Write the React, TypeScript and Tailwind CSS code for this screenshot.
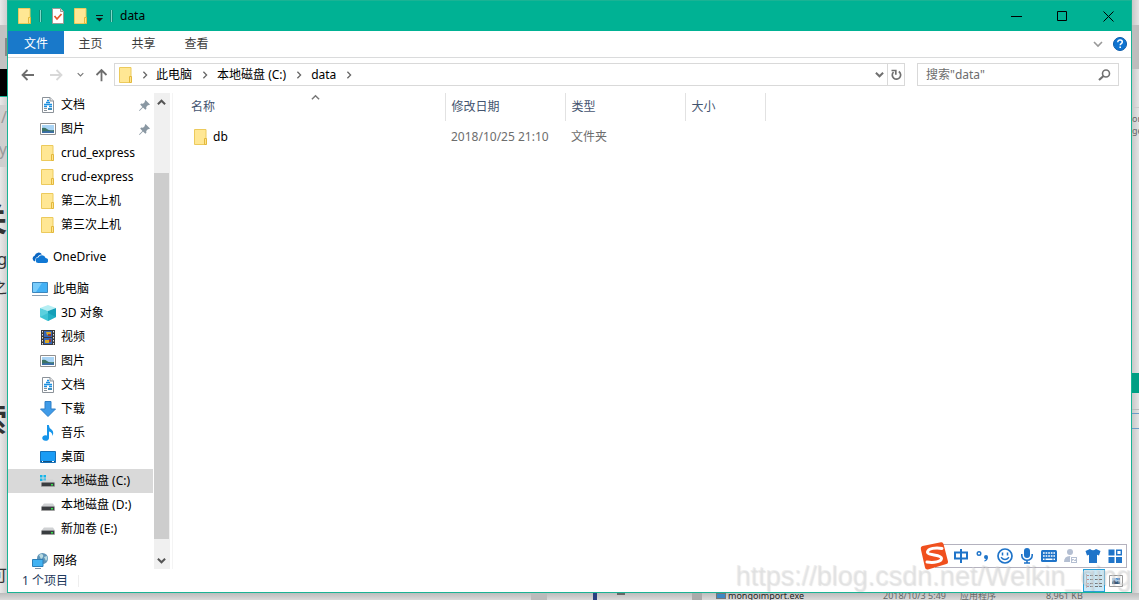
import type { ReactNode } from "react";

type IconName =
  | "document"
  | "picture"
  | "folder"
  | "onedrive"
  | "computer"
  | "cube"
  | "video"
  | "download"
  | "music"
  | "desktop"
  | "systemDrive"
  | "drive"
  | "network";

type TreeItem = { label: string; icon: IconName; pinned?: boolean; active?: boolean };
type TreeGroup = { root?: TreeItem; items: TreeItem[] };

const TREE: TreeGroup[] = [
  {
    items: [
      { label: "文档", icon: "document", pinned: true },
      { label: "图片", icon: "picture", pinned: true },
      { label: "crud_express", icon: "folder" },
      { label: "crud-express", icon: "folder" },
      { label: "第二次上机", icon: "folder" },
      { label: "第三次上机", icon: "folder" },
    ],
  },
  { root: { label: "OneDrive", icon: "onedrive" }, items: [] },
  {
    root: { label: "此电脑", icon: "computer" },
    items: [
      { label: "3D 对象", icon: "cube" },
      { label: "视频", icon: "video" },
      { label: "图片", icon: "picture" },
      { label: "文档", icon: "document" },
      { label: "下载", icon: "download" },
      { label: "音乐", icon: "music" },
      { label: "桌面", icon: "desktop" },
      { label: "本地磁盘 (C:)", icon: "systemDrive", active: true },
      { label: "本地磁盘 (D:)", icon: "drive" },
      { label: "新加卷 (E:)", icon: "drive" },
    ],
  },
  { root: { label: "网络", icon: "network" }, items: [] },
];

const CRUMBS = ["此电脑", "本地磁盘 (C:)", "data"];
const MENU = ["主页", "共享", "查看"];
const FILES = [{ name: "db", modified: "2018/10/25 21:10", type: "文件夹", size: "" }];

export default function App() {
  return (
    <div className="flex min-h-screen flex-col overflow-hidden bg-[#dcdcdc] font-['Noto_Sans','Noto_Sans_CJK_SC',sans-serif] text-xs text-black">
      <div className="flex flex-1">
        <LeftBackdrop />
        <main className="relative flex min-w-0 flex-1 flex-col border border-[#1ab394] bg-white">
          <TitleBar />
          <Ribbon />
          <AddressRow />
          <div className="flex flex-1 pt-[7px]">
            <Sidebar />
            <FileList />
          </div>
          <StatusBar />
          <InputMethodBar />
        </main>
        <RightBackdrop />
      </div>
      <BottomBackdrop />
    </div>
  );
}

function TitleBar() {
  return (
    <header className="flex h-[30px] items-center bg-[#00b294]">
      <div className="flex flex-1 items-center pl-2.5">
        <FolderIcon />
        <Separator />
        <button aria-label="属性" className="ml-2.5">
          <svg width="12" height="16" viewBox="0 0 12 16">
            <path d="M.5.5h8l3 3v12H.5z" fill="#fff" stroke="#a09a94" />
            <path d="M8.5.5v3h3" fill="#ddd" stroke="#a09a94" />
            <path d="M2.500 8l2.500 3 4.500-5" fill="none" stroke="#e8562a" strokeWidth="1.700" />
          </svg>
        </button>
        <button aria-label="新建文件夹" className="ml-2.5">
          <FolderIcon />
        </button>
        <button aria-label="自定义快速访问工具栏" className="ml-2 mt-1">
          <svg width="7" height="7" viewBox="0 0 7 7">
            <path d="M0 .5h7" stroke="#111" />
            <path d="M0 3h7L3.500 6.500z" fill="#111" />
          </svg>
        </button>
        <Separator />
        <h1 className="ml-[7px]">data</h1>
      </div>
      <WindowButton label="最小化">
        <path d="M0 5.500h11" />
      </WindowButton>
      <WindowButton label="最大化">
        <path d="M.5.5h9v9h-9z" />
      </WindowButton>
      <WindowButton label="关闭">
        <path d="M.5.5l10 10M10.500.5l-10 10" />
      </WindowButton>
    </header>
  );
}

function Separator() {
  return <span className="ml-[7px] h-3 w-[3px] border-x border-[#0a8f78] bg-[#7fd8c9]" />;
}

function WindowButton({ label, children }: { label: string; children: ReactNode }) {
  return (
    <button aria-label={label} className="flex h-full w-[46px] items-center justify-center">
      <svg width="11" height="11" viewBox="0 0 11 11" fill="none" stroke="#000">
        {children}
      </svg>
    </button>
  );
}

function Ribbon() {
  return (
    <nav className="flex h-[27px] items-start border-b border-[#dadbdc] text-[#3c3c3c]">
      <button className="h-[23px] w-14 bg-[#1979ca] pt-0.5 text-white">文件</button>
      {MENU.map((item) => (
        <button key={item} className="h-[23px] w-[53px] pt-0.5">
          {item}
        </button>
      ))}
      <div className="ml-auto flex h-[26px] items-center gap-2.5 pr-1">
        <button aria-label="展开功能区">
          <Chevron direction="down" size={10} color="#999" />
        </button>
        <button aria-label="帮助">
          <svg width="14" height="14" viewBox="0 0 14 14">
            <circle cx="7" cy="7" r="6.500" fill="#0f74d1" stroke="#0b5aa8" />
            <path
              d="M4.800 5.200c0-1.500 1-2.200 2.300-2.200s2.200.8 2.200 1.900c0 1.600-2.100 1.700-2.100 3.300"
              fill="none"
              stroke="#fff"
              strokeWidth="1.500"
            />
            <path d="M6.400 9.400h1.600V11H6.400z" fill="#fff" />
          </svg>
        </button>
      </div>
    </nav>
  );
}

function AddressRow() {
  return (
    <div className="flex items-center pt-[5px] pr-3">
      <div className="flex w-[106px] items-center pl-[13px]">
        <button aria-label="后退">
          <ArrowIcon color="#6e6e6e" className="" />
        </button>
        <button aria-label="前进" className="ml-4" disabled>
          <ArrowIcon color="#d8d8d8" className="rotate-180" />
        </button>
        <button aria-label="最近浏览的位置" className="ml-3.5">
          <Chevron direction="down" size={7} color="#777" />
        </button>
        <button aria-label="上移" className="ml-[11px]">
          <ArrowIcon color="#6e6e6e" className="rotate-90" />
        </button>
      </div>
      <div className="flex h-[23px] min-w-0 flex-1 items-center border border-[#d9d9d9]">
        <span className="ml-1">
          <FolderIcon />
        </span>
        <span className="flex w-[23px] justify-center">
          <Chevron direction="right" size={8} color="#666" />
        </span>
        {CRUMBS.map((crumb) => (
          <span key={crumb} className="flex items-center">
            <button>{crumb}</button>
            <span className="flex w-[25px] justify-center">
              <Chevron direction="right" size={8} color="#666" />
            </span>
          </span>
        ))}
        <button aria-label="以前的位置" className="ml-auto mr-[3px]">
          <Chevron direction="down" size={9} color="#707070" strong />
        </button>
        <button
          aria-label="刷新"
          className="flex h-full w-[17px] items-center justify-center border-l border-[#d9d9d9]"
        >
          <svg width="11" height="12" viewBox="0 0 11 12" fill="none" stroke="#707070" strokeWidth="1.700">
            <path d="M7.800 2.500A4.200 4.200 0 1 1 2.500 3" />
            <path d="M.5 1.500h4.300v4.300" />
          </svg>
        </button>
      </div>
      <label className="ml-3 flex h-[23px] w-[202px] items-center border border-[#d9d9d9] pr-[7px] pl-2">
        <input
          type="text"
          aria-label="搜索"
          placeholder={'搜索"data"'}
          className="min-w-0 flex-1 outline-none placeholder:text-[#6d6d6d]"
        />
        <svg width="13" height="12" viewBox="0 0 13 12" fill="none" stroke="#707070">
          <circle cx="8" cy="4.500" r="3.500" strokeWidth="1.600" />
          <path d="M5.500 7L1 11" strokeWidth="2.200" />
        </svg>
      </label>
    </div>
  );
}

function Sidebar() {
  return (
    <div className="flex w-[165px] border-r border-[#f4f4f4]">
      <nav className="flex h-[476px] w-[145px] flex-col gap-2 overflow-hidden">
        {TREE.map((group, i) => (
          <ul key={i} className="shrink-0">
            {group.root && <TreeRow item={group.root} root />}
            {group.items.map((item) => (
              <TreeRow key={item.label} item={item} />
            ))}
          </ul>
        ))}
      </nav>
      <div className="ml-px flex h-[476px] w-4 flex-col items-center bg-[#f0f0f0] pr-px">
        <button aria-label="向上滚动" className="flex h-[18px] items-center">
          <Chevron direction="up" size={9} color="#555" strong />
        </button>
        <div className="mt-[62px] w-full flex-1 bg-[#cdcdcd]" />
        <button aria-label="向下滚动" className="mt-3 flex h-[18px] items-center">
          <Chevron direction="down" size={9} color="#555" strong />
        </button>
      </div>
    </div>
  );
}

function TreeRow({ item, root = false }: { item: TreeItem; root?: boolean }) {
  return (
    <li>
      <button
        className={`flex h-6 w-full items-center pr-[3px] text-left ${root ? "pl-6" : "pl-8"} ${
          item.active ? "bg-[#d9d9d9]" : ""
        }`}
      >
        <span className="flex w-4 justify-center">
          <TreeIcon name={item.icon} />
        </span>
        <span className="ml-[5px] flex-1 whitespace-nowrap">{item.label}</span>
        {item.pinned && (
          <svg width="11" height="11" viewBox="0 0 11 11">
            <path
              d="M6.500 0L11 4.500l-1.200.8-.7-.2L7.200 7l.2 1.800-1 1L4 7.600.6 11 0 10.400 3.400 7 1.200 4.600l1-1L4 3.800l1.900-1.900-.2-.7z"
              fill="#8a98a3"
            />
          </svg>
        )}
      </button>
    </li>
  );
}

function FileList() {
  return (
    <div className="flex-1">
      <table className="table-fixed border-collapse text-left">
        <thead className="text-[#44546f]">
          <tr className="h-7">
            <th scope="col" className="relative w-[272px] border-r border-[#e2e2e2] pl-[18px] font-normal">
              名称
              <span className="absolute top-0 left-[138px]">
                <Chevron direction="up" size={9} color="#777" />
              </span>
            </th>
            <th scope="col" className="w-[120px] border-r border-[#e2e2e2] pl-1.5 font-normal">
              修改日期
            </th>
            <th scope="col" className="w-[120px] border-r border-[#e2e2e2] pl-1.5 font-normal">
              类型
            </th>
            <th scope="col" className="w-20 border-r border-[#e2e2e2] pl-1.5 font-normal">
              大小
            </th>
          </tr>
        </thead>
        <tbody className="text-[#6d6d6d]">
          {FILES.map((file) => (
            <tr key={file.name} className="h-8">
              <td className="pl-[21px] text-black">
                <span className="flex items-center gap-[5px]">
                  <FolderIcon />
                  {file.name}
                </span>
              </td>
              <td className="pl-1.5 whitespace-nowrap">{file.modified}</td>
              <td className="pl-1.5">{file.type}</td>
              <td className="pl-1.5">{file.size}</td>
            </tr>
          ))}
        </tbody>
      </table>
    </div>
  );
}

function StatusBar() {
  return (
    <footer className="flex h-[23px] items-center pr-1 pl-3.5 text-[#1e395b]">
      <span>1 个项目</span>
      <span className="ml-2.5 h-3 w-px bg-[#eee]" />
      <div className="ml-auto flex h-full items-center">
        <button
          aria-label="详细信息"
          className="flex h-full w-[22px] items-center justify-center border border-[#26a0da] bg-[#cbe8f6]"
        >
          <svg width="16" height="14" viewBox="0 0 16 14" stroke="#777">
            <path d="M.5 0v14" stroke="#bbb" />
            <path d="M4 1.500h3M9 1.500h3M13 1.500h3M4 5.500h3M9 5.500h3M13 5.500h3M4 9.500h3M9 9.500h3M13 9.500h3M4 12.500h3M9 12.500h3M13 12.500h3" />
            <path d="M1.500 1.500h1M1.500 5.500h1M1.500 9.500h1M1.500 12.500h1" stroke="#a33" />
          </svg>
        </button>
        <button aria-label="大缩略图" className="flex w-[22px] justify-center">
          <svg width="14" height="12" viewBox="0 0 14 12">
            <path d="M.5.5h13v11H.5z" fill="#fff" stroke="#999" />
            <path d="M3 3h8v6H3z" fill="#a9cbea" />
            <path d="M3 9V7l2-2 2 2 2-1 2 1v2z" fill="#39597a" />
            <path d="M7 3h4v2H8z" fill="#3679c8" />
          </svg>
        </button>
      </div>
    </footer>
  );
}

// Floats over the lower right corner, like the watermark that runs below it.
function InputMethodBar() {
  return (
    <>
      <div className="absolute right-1 bottom-6 flex h-6 w-[192px] items-center justify-end border border-[#b4b2be] bg-white text-[#1f74c9]">
        <svg className="absolute -left-4" width="30" height="28" viewBox="0 0 30 28">
          <path d="M2.500 4L21 .3q2-.3 2.500 1.700L28 19.500q.4 2-1.600 2.600L8 27.500q-2.500.5-3-2L.8 7Q.3 4.500 2.500 4z" fill="#f0501e" />
          <path
            d="M22 6.500C16 5 8 6.500 7.500 10c-.4 3.600 14 2.200 14 6.200 0 3.800-8 4.800-14.500 3.800"
            fill="none"
            stroke="#fff"
            strokeWidth="3"
            strokeLinecap="round"
          />
        </svg>
        <ToolButton label="中文输入">
          <path d="M2 4.500h12v6H2zM8 1v14" fill="none" stroke="currentColor" strokeWidth="2" />
        </ToolButton>
        <ToolButton label="中文标点">
          <circle cx="4" cy="5.500" r="1.800" fill="none" stroke="currentColor" strokeWidth="1.400" />
          <path d="M9 9a2 2 0 1 1 4 0c0 2.500-1.200 4-3.500 4.500l-.3-1q1.600-.6 1.700-1.600Q9 11 9 9z" fill="currentColor" />
        </ToolButton>
        <ToolButton label="表情">
          <circle cx="8" cy="8" r="7" fill="none" stroke="currentColor" strokeWidth="1.700" />
          <path d="M5.500 4.500v3M10.500 4.500v3" stroke="currentColor" strokeWidth="1.500" />
          <path d="M4 9.200q4 4.600 8 0" fill="none" stroke="currentColor" strokeWidth="1.300" />
        </ToolButton>
        <ToolButton label="语音输入">
          <rect x="5" y="0" width="6" height="10" rx="3" fill="currentColor" />
          <path d="M2.800 6v1.500a5.200 4.800 0 0 0 10.400 0V6M8 12v3M5 15h6" fill="none" stroke="currentColor" strokeWidth="1.600" />
        </ToolButton>
        <ToolButton label="软键盘">
          <rect x="0" y="2" width="16" height="12" rx="1.500" fill="currentColor" />
          <path d="M2 5h12M2 8h12" stroke="#fff" strokeWidth="1.700" strokeDasharray="1.700 .9" />
          <path d="M2 11.300h1.500M4.500 11.300h7M12.500 11.300H14" stroke="#fff" strokeWidth="1.500" />
        </ToolButton>
        <ToolButton label="账户">
          <circle cx="7" cy="4" r="3" fill="#b4bfd2" />
          <path d="M1 14q0-6 6-6 3 0 4 1v5z" fill="#b4bfd2" />
          <path d="M7.500 8.500h7v7h-7z" fill="#b4bfd2" stroke="#fff" />
          <path d="M9 10.500h4L9 13.500h4" fill="none" stroke="#fff" />
        </ToolButton>
        <ToolButton label="皮肤">
          <path d="M5 1q3 2.400 6 0l4.500 2L14 7.500l-2-.7V15H4V6.800l-2 .7L.5 3z" fill="currentColor" />
        </ToolButton>
        <ToolButton label="工具箱">
          <path d="M1.500 1.500h6v6h-6zM1.500 9h6v6h-6zM9 9h6v6H9z" fill="currentColor" />
          <path d="M9.700 2.200h4.600v4.600H9.700z" fill="none" stroke="currentColor" strokeWidth="1.400" />
        </ToolButton>
      </div>
      <p className="pointer-events-none absolute right-0 bottom-0 z-10 font-['Liberation_Sans',sans-serif] text-[27px] leading-8 whitespace-nowrap text-[#dcdcdc]/45 [text-shadow:1px_1px_1px_rgba(120,120,120,0.2)]">
        https://blog.csdn.net/Welkin_qing
      </p>
    </>
  );
}

function ToolButton({ label, children }: { label: string; children: ReactNode }) {
  return (
    <button aria-label={label} className="flex w-[22px] justify-center">
      <svg width="16" height="16" viewBox="0 0 16 16">
        {children}
      </svg>
    </button>
  );
}

// Slices of the other windows that show around this one.
function LeftBackdrop() {
  return (
    <aside className="flex w-[7px] flex-col items-end overflow-hidden bg-linear-to-r from-[#e8e8e8] to-[#cfcfcf] whitespace-nowrap text-[#333]">
      <div className="h-[25px] w-full shrink-0" />
      <div className="flex h-11 w-full shrink-0 items-center justify-end bg-[#c2c2c2]">
        <span className="h-[18px] w-0.5 bg-[#888]" />
      </div>
      <div className="h-7 w-full shrink-0 border-b border-[#1ab394] bg-black" />
      <div className="mt-2 flex h-[62px] w-full shrink-0 flex-col items-end bg-[#cfcfcf] text-base text-[#999]">
        <span className="h-8">/</span>
        <span>:y</span>
      </div>
      <span className="mt-8 text-[32px] leading-10 font-bold">关</span>
      <span className="mt-2 text-base leading-6">ng</span>
      <span className="mt-1 text-base leading-6">之</span>
      <span className="mt-[100px] text-[32px] leading-10 font-bold">索</span>
      <span className="mt-[124px] text-base leading-6">可</span>
    </aside>
  );
}

function RightBackdrop() {
  return (
    <aside className="flex w-[7px] flex-col overflow-hidden bg-linear-to-r from-[#c8c8c8] to-[#e4e4e4] text-[9px] whitespace-nowrap text-[#666]">
      <div className="h-[25px] shrink-0" />
      <div className="h-11 shrink-0 bg-[#bdbdbd]" />
      <div className="mt-[38px] h-1.5 shrink-0 border-t border-[#ccc]" />
      <span className="leading-3">or</span>
      <span className="leading-3">ge</span>
      <div className="mt-[236px] h-5 shrink-0 bg-[#009f84]" />
      <div className="mt-4 h-1 shrink-0 border-t border-[#bbb]" />
      <div className="h-4 shrink-0 border-y border-[#6c9dc6]" />
    </aside>
  );
}

function BottomBackdrop() {
  return (
    <aside className="flex h-[7px] w-full overflow-hidden bg-linear-to-b from-[#bcbcbc] to-[#dadada] text-[9px] leading-[5px] whitespace-nowrap text-[#666]">
      <div className="w-[531px]" />
      <div className="w-4 bg-[#bbb]" />
      <div className="flex w-[145px] pl-[46px]">
        <span className="w-1 bg-[#2a3f80]" />
        <span className="ml-5 h-0.5 w-2 bg-[#666]" />
      </div>
      <div className="w-2.5 bg-[#aaa]" />
      <div className="flex flex-1 pl-3.5">
        <span className="h-1.5 w-2.5 border border-[#777] bg-[#3d88c4]" />
        <span className="w-[157px] pl-0.5 text-[#222]">mongoimport.exe</span>
        <span className="w-[77px]">2018/10/3 5:49</span>
        <span className="w-[86px]">应用程序</span>
        <span>8,961 KB</span>
      </div>
    </aside>
  );
}

const CHEVRON_PATH = {
  down: "M1 3l4 4 4-4",
  up: "M1 7l4-4 4 4",
  right: "M3 1l4 4-4 4",
};

function Chevron({
  direction,
  size,
  color,
  strong = false,
}: {
  direction: keyof typeof CHEVRON_PATH;
  size: number;
  color: string;
  strong?: boolean;
}) {
  return (
    <svg width={size} height={size} viewBox="0 0 10 10" fill="none" stroke={color} strokeWidth={strong ? 2.2 : 1.6}>
      <path d={CHEVRON_PATH[direction]} />
    </svg>
  );
}

function ArrowIcon({ color, className }: { color: string; className: string }) {
  return (
    <svg className={className} width="13" height="12" viewBox="0 0 13 12" fill="none" stroke={color} strokeWidth="1.800">
      <path d="M1.500 6H13M6.500 1l-5 5 5 5" />
    </svg>
  );
}

function FolderIcon() {
  return (
    <svg width="14" height="16" viewBox="0 0 14 16">
      <path d="M.5.5h11.500v15H.5z" fill="#ffe794" stroke="#ecca5c" />
      <path d="M10.500 9.500h2v6h-2z" fill="#ffe48a" stroke="#e3b83d" />
    </svg>
  );
}

function TreeIcon({ name }: { name: IconName }) {
  switch (name) {
    case "folder":
      return <FolderIcon />;
    case "document":
      return (
        <svg width="12" height="16" viewBox="0 0 12 16">
          <path d="M.5.5H8l3.500 3.500v11.500H.5z" fill="#fff" stroke="#8b9299" />
          <path d="M8 .5V4h3.500" fill="#e8e8e8" stroke="#8b9299" />
          <path d="M5 3.500h2M4 5.500h4M2 7.500h8M2 9.500h3M7 9.500h3" stroke="#1c8fe0" strokeWidth="1.300" />
          <path d="M2 11.500h3M2 13.500h3" stroke="#8b9299" />
          <path d="M6 11h4v2H6z" fill="#3f8fbf" />
        </svg>
      );
    case "picture":
      return (
        <svg width="16" height="12" viewBox="0 0 16 12">
          <path d="M.5.5h15v11H.5z" fill="#fff" stroke="#8f8f8f" />
          <path d="M2 2h12v8H2z" fill="#a9d4f5" />
          <path d="M2 5q3-1 5 1t7 1v3H2z" fill="#3d7466" />
          <path d="M2 8.500q6-1 12 0V10H2z" fill="#3c6fa8" />
        </svg>
      );
    case "onedrive":
      return (
        <svg width="16" height="11" viewBox="0 0 16 11">
          <path d="M3 9.500a3 3 0 0 1-.3-5.800A4 4 0 0 1 10 2.500Q7 2 5.500 5 3 5.500 3 9.500z" fill="#0a66c2" />
          <path d="M6.500 11a2.700 2.700 0 0 1-.2-5.400 3.900 3.900 0 0 1 7.300.4A2.500 2.500 0 0 1 13.600 11z" fill="#1078d4" />
        </svg>
      );
    case "computer":
      return (
        <svg width="16" height="16" viewBox="0 0 16 16">
          <path d="M.5 1.500h15v10H.5z" fill="#43b1f5" stroke="#3b86bd" />
          <path d="M1 2h9L4 11H1z" fill="#78ccfb" />
          <path d="M0 14.500h16" stroke="#8aa0b4" />
        </svg>
      );
    case "cube":
      return (
        <svg width="16" height="16" viewBox="0 0 16 16">
          <path d="M0 3l8-3 8 3-8 3z" fill="#b5eef3" />
          <path d="M0 3l8 3v10l-8-4z" fill="#5bd0de" />
          <path d="M16 3L8 6v10l8-4z" fill="#149fb8" />
          <path d="M0 12l8-4 8 4-8 4z" fill="#2cbccd" opacity=".6" />
        </svg>
      );
    case "video":
      return (
        <svg width="14" height="15" viewBox="0 0 14 15">
          <path d="M0 0h14v15H0z" fill="#3a3a3a" />
          <path d="M1.500 1v14M12.500 1v14" stroke="#e4e4e4" strokeDasharray="1.500 1.500" />
          <path d="M3 1h8v6H3zM3 8h8v6H3z" fill="#3566b8" />
          <path d="M5 2h5v3H6zM4 10h4v3H4z" fill="#d9a929" />
          <path d="M7 4h3v2H7zM8 9h2v3H8z" fill="#a2392b" />
        </svg>
      );
    case "download":
      return (
        <svg width="16" height="16" viewBox="0 0 16 16">
          <path d="M5 .5h6V8h4.500L8 15.500.5 8H5z" fill="#3f9be8" stroke="#2f7fc6" />
        </svg>
      );
    case "music":
      return (
        <svg width="12" height="16" viewBox="0 0 12 16">
          <path d="M5 0h1.800q.2 3 2.700 4.500 3 2.500.8 6.500.3-3.500-3.300-4.500v6.200A3.400 2.800 0 1 1 5 10.500z" fill="#1795ea" />
        </svg>
      );
    case "desktop":
      return (
        <svg width="16" height="12" viewBox="0 0 16 12">
          <path d="M.5.5h15v11H.5z" fill="#1a9cf5" stroke="#1570b8" />
          <path d="M1 10.500h14" stroke="#14507f" />
          <path d="M2 10.500h1M12 10.500h2" stroke="#fff" />
        </svg>
      );
    case "systemDrive":
    case "drive":
      return (
        <svg width="16" height="16" viewBox="0 0 16 16">
          {name === "systemDrive" && (
            <path d="M0 2h2.500v2.500H0zM3.500 2H6v2.500H3.500zM0 5.500h2.500V8H0zM3.500 5.500H6V8H3.500z" fill="#13b5ea" />
          )}
          <path d="M4 6.500h9l2 3H1.500z" fill="#cfd1d3" opacity={name === "systemDrive" ? 0.7 : 1} />
          <path d="M1.500 9.500h13v4h-13z" fill="#3a3d40" />
          <path d="M1.500 13.500h13" stroke="#a0a0a0" />
          <path d="M11 11h2v1.500h-2z" fill="#35e04a" />
        </svg>
      );
    case "network":
      return (
        <svg width="16" height="16" viewBox="0 0 16 16">
          <circle cx="10.500" cy="5.500" r="5.500" fill="#5f95b8" />
          <path d="M7 2q3-2 4 0t-2 4zM12 4l3-1q1 3-1 5z" fill="#b9dbe2" />
          <path d="M.5 6.500h10.500v7H.5z" fill="#41b2f2" stroke="#2c7fb8" />
          <path d="M3 15.500h6" stroke="#7f93a6" />
        </svg>
      );
  }
}
